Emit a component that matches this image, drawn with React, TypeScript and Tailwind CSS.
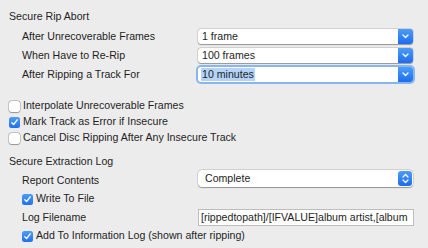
import React from "react";

function Chevron() {
  return (
    <svg width="7" height="5" viewBox="0 0 7 5" className="block">
      <path d="M1 1 L3.5 3.5 L6 1" fill="none" stroke="white" strokeWidth="1.3" strokeLinecap="round" strokeLinejoin="round" />
    </svg>
  );
}

function UpDown() {
  return (
    <svg width="7" height="11" viewBox="0 0 7 11" className="block">
      <path d="M1 4 L3.5 1.5 L6 4" fill="none" stroke="white" strokeWidth="1.2" strokeLinecap="round" strokeLinejoin="round" />
      <path d="M1 7 L3.5 9.5 L6 7" fill="none" stroke="white" strokeWidth="1.2" strokeLinecap="round" strokeLinejoin="round" />
    </svg>
  );
}

function Popup({ value, focused }: { value: string; focused?: boolean }) {
  return (
    <div
      className={
        "w-[215px] h-[15px] flex bg-white rounded-[3px] " +
        (focused
          ? "shadow-[0_0_0_2px_#8ab6ef]"
          : "shadow-[0_0_0_0.5px_rgba(0,0,0,0.18),0_0.5px_1px_rgba(0,0,0,0.3)]")
      }
    >
      <div className="flex-1 flex items-center pl-[3px] overflow-hidden">
        <span className={"leading-[13px] px-[1px] " + (focused ? "bg-[#b4d3f9]" : "")}>{value}</span>
      </div>
      <div className="w-[15px] h-full rounded-r-[3px] bg-gradient-to-b from-[#4d9cf8] to-[#1c6cf0] flex items-center justify-center">
        <Chevron />
      </div>
    </div>
  );
}

function Check({ checked }: { checked?: boolean }) {
  return checked ? (
    <div className="w-[11px] h-[11px] rounded-[2.5px] bg-gradient-to-b from-[#4d9cf8] to-[#1f70f0] flex items-center justify-center">
      <svg width="9" height="9" viewBox="0 0 9 9" className="block">
        <path d="M1.8 4.8 L3.6 6.6 L7.2 1.8" fill="none" stroke="white" strokeWidth="1.4" strokeLinecap="round" strokeLinejoin="round" />
      </svg>
    </div>
  ) : (
    <div className="w-[11px] h-[11px] rounded-[2.5px] bg-white shadow-[0_0_0_0.5px_rgba(0,0,0,0.3),0_0.5px_1px_rgba(0,0,0,0.25)]" />
  );
}

function CheckRow({ label, checked, indent }: { label: string; checked?: boolean; indent?: boolean }) {
  return (
    <div className={"h-[16px] flex items-center gap-[3px] " + (indent ? "pl-[13px]" : "")}>
      <Check checked={checked} />
      <span>{label}</span>
    </div>
  );
}

export default function App() {
  return (
    <div
      className="w-[428px] h-[248px] bg-[#ececec] text-[#1e1e1e] text-[10.6px] pt-[9px] pl-[9px] flex flex-col overflow-hidden"
      style={{ fontFamily: '"Liberation Sans", Arial, sans-serif' }}
    >
      <div className="h-[14px] leading-[14px]">Secure Rip Abort</div>
      <div className="mt-[6px] flex flex-col gap-[4px]">
        <div className="h-[15px] flex items-center">
          <span className="w-[189px] pl-[13px]">After Unrecoverable Frames</span>
          <Popup value="1 frame" />
        </div>
        <div className="h-[15px] flex items-center">
          <span className="w-[189px] pl-[13px]">When Have to Re-Rip</span>
          <Popup value="100 frames" />
        </div>
        <div className="h-[15px] flex items-center">
          <span className="w-[189px] pl-[13px]">After Ripping a Track For</span>
          <Popup value="10 minutes" focused />
        </div>
      </div>
      <div className="mt-[16px] flex flex-col">
        <CheckRow label="Interpolate Unrecoverable Frames" />
        <CheckRow label="Mark Track as Error if Insecure" checked />
        <CheckRow label="Cancel Disc Ripping After Any Insecure Track" />
      </div>
      <div className="mt-[8px] h-[14px] leading-[14px]">Secure Extraction Log</div>
      <div className="mt-[2px] h-[17px] flex items-center">
        <span className="w-[189px] pl-[13px] pt-[4px]">Report Contents</span>
        <div className="w-[215px] h-[17px] flex bg-white rounded-[4px] shadow-[0_0_0_0.5px_rgba(0,0,0,0.18),0_0.5px_1px_rgba(0,0,0,0.3)]">
          <div className="flex-1 flex items-center pl-[7px]">Complete</div>
          <div className="w-[14px] my-[1px] mr-[1px] rounded-[3px] bg-gradient-to-b from-[#4d9cf8] to-[#1c6cf0] flex items-center justify-center">
            <UpDown />
          </div>
        </div>
      </div>
      <div className="mt-[4px]">
        <CheckRow label="Write To File" checked indent />
      </div>
      <div className="mt-[2px] h-[17px] flex items-center">
        <span className="w-[189px] pl-[13px]">Log Filename</span>
        <div className="w-[216px] h-[17px] bg-white border border-[#bdbdbd] flex items-center pl-[2px] whitespace-nowrap">
          [rippedtopath]/[IFVALUE]album artist,[album
        </div>
      </div>
      <div className="mt-[2px]">
        <CheckRow label="Add To Information Log (shown after ripping)" checked indent />
      </div>
    </div>
  );
}
